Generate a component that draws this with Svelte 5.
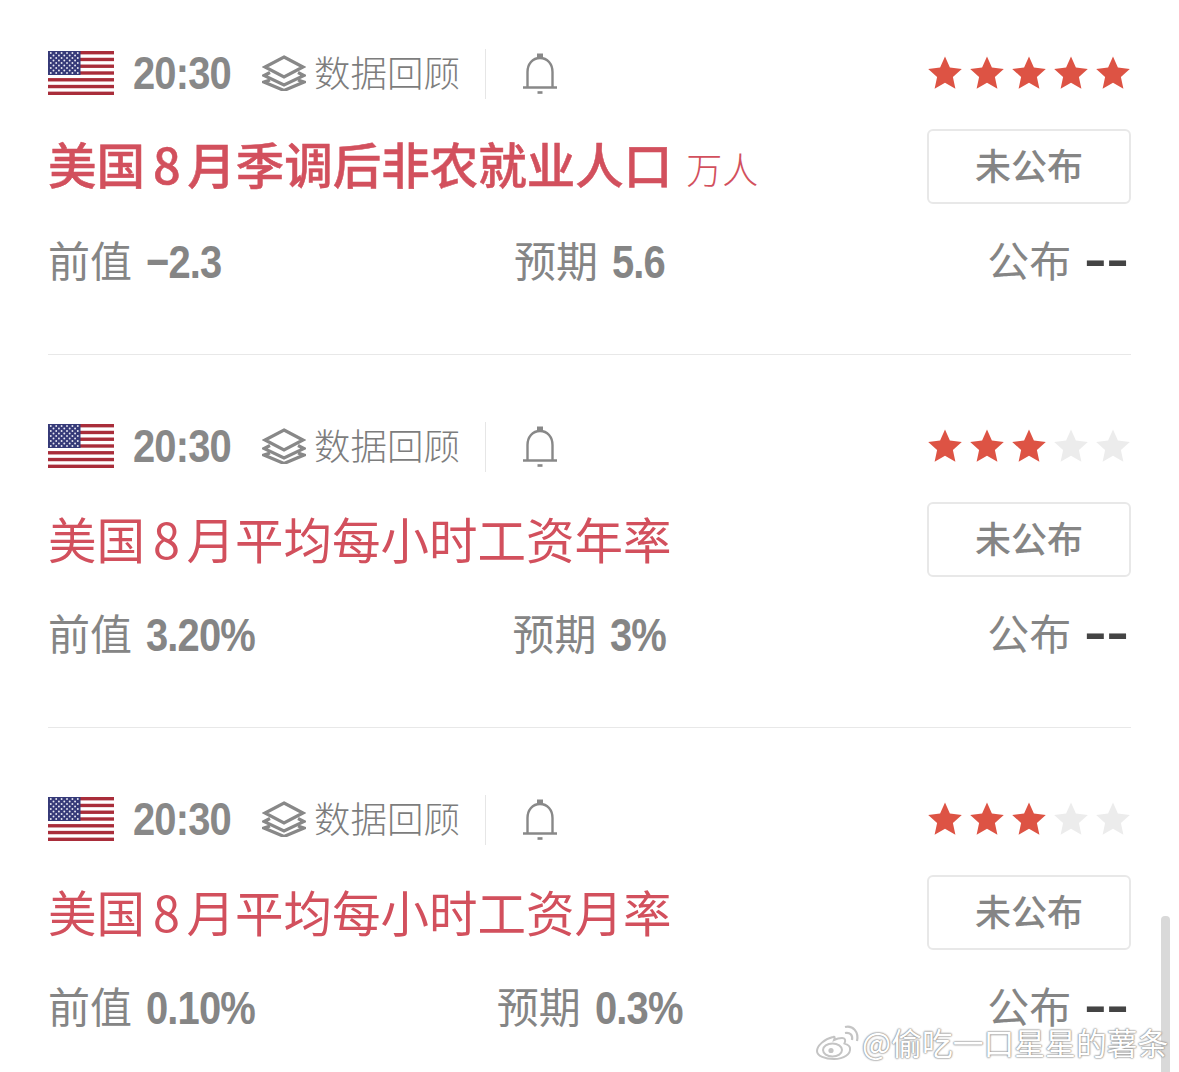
<script>
  const items = [
    { title: '季调后非农就业人口', unit: '万人', bold: true, prev: '−2.3', fore: '5.6', stars: 5 },
    { title: '平均每小时工资年率', unit: '', bold: false, prev: '3.20%', fore: '3%', stars: 3 },
    { title: '平均每小时工资月率', unit: '', bold: false, prev: '0.10%', fore: '0.3%', stars: 3 }
  ];
  const starPath = 'M17 0.5 L21.9 11.6 L33.8 12.9 L24.9 21 L27.4 32.8 L17 26.8 L6.6 32.8 L9.1 21 L0.2 12.9 L12.1 11.6 Z';
  const stripes = [0, 2, 4, 6, 8, 10, 12];
  const dots = [];
  for (let r = 0; r < 9; r++) {
    const n = r % 2 ? 5 : 6;
    for (let c = 0; c < n; c++) dots.push({ x: (r % 2 ? 5.5 : 2.8) + c * 5.4, y: 2 + r * 2.5 });
  }
  // Numbers are drawn horizontally condensed; give back the space the scale removes.
  const adv = { '.': 0.278, '%': 0.889, '−': 0.584 };
  const squeeze = (text) => {
    let w = 0;
    for (const ch of text) w += (adv[ch] ?? 0.556) * 47 - 1;
    return -(w * 0.15);
  };
</script>

<div class="page">
<main class="list">
  {#each items as item}
    <article class="item">
      <div class="top">
        <svg class="flag" viewBox="0 0 66 44" width="66" height="44" aria-hidden="true">
          <rect width="66" height="44" rx="2" fill="#fff" />
          {#each stripes as s}
            <rect y={s * 3.385} width="66" height="3.385" fill="#a92d3a" />
          {/each}
          <rect width="32.5" height="24" fill="#363a78" />
          {#each dots as d}
            <circle cx={d.x} cy={d.y} r="0.95" fill="#e8e8f2" />
          {/each}
        </svg>
        <span class="time">20:30</span>
        <svg class="layers" viewBox="0 0 44 36" width="44" height="36" aria-hidden="true">
          <path d="M22 2 L41 12 L22 22 L3 12 Z" fill="none" stroke="#888" stroke-width="3.2" />
          <path d="M8 17.5 L2 20.5 L22 30 L42 20.5 L36 17.5" fill="none" stroke="#888" stroke-width="3.2" />
          <path d="M8 25 L2 27 L22 35.5 L42 27 L36 25" fill="none" stroke="#888" stroke-width="3.2" />
        </svg>
        <span class="review">数据回顾</span>
        <span class="sep"></span>
        <svg class="bell" viewBox="0 0 36 42" width="36" height="42" aria-hidden="true">
          <path d="M5.5 35 V20 C5.5 12 10.5 6 18 6 C25.5 6 30.5 12 30.5 20 V35" fill="none" stroke="#888" stroke-width="2.4" />
          <path d="M1 35.5 H35" stroke="#888" stroke-width="2.6" />
          <path d="M15 3.5 H21" stroke="#888" stroke-width="4" />
          <path d="M15.5 40.5 H20.5" stroke="#888" stroke-width="2.6" />
        </svg>
        <div class="stars">
          {#each [1, 2, 3, 4, 5] as n}
            <svg viewBox="0 0 34 34" width="34" height="34" aria-hidden="true">
              <path d={starPath} fill={n <= item.stars ? '#dd5344' : '#ececec'} />
            </svg>
          {/each}
        </div>
      </div>

      <div class="mid">
        <h2 class:bold={item.bold}>美国<span class="eight">8</span>月{item.title}{#if item.unit}<span class="unit">{item.unit}</span>{/if}</h2>
        <div class="btn">未公布</div>
      </div>

      <div class="stats">
        <div class="stat left"><span class="label">前值</span><b class="num" style:margin-right="{squeeze(item.prev)}px">{item.prev}</b></div>
        <div class="stat"><span class="label">预期</span><b class="num" style:margin-right="{squeeze(item.fore)}px">{item.fore}</b></div>
        <div class="stat right"><span class="label">公布</span><b class="dash">--</b></div>
      </div>
    </article>
  {/each}
</main>

<div class="scrollbar"></div>
<div class="mark">
  <svg viewBox="0 0 46 38" width="46" height="38" aria-hidden="true">
    <path d="M18 14 C9 16 2 23 2 28 C2 33 10 36 19 36 C29 36 36 31 35 25 C34.500 22 31 21 29.500 20.500 C31 17 30 15 27 15 C24 15 21 16 19 17 C20 14 20 13.500 18 14 Z" fill="#fff" stroke="#c4c4c4" stroke-width="2" />
    <ellipse cx="17.500" cy="27" rx="9.500" ry="6.500" fill="#fff" stroke="#c4c4c4" stroke-width="2" />
    <circle cx="16" cy="27.500" r="2.600" fill="#c4c4c4" />
    <path d="M30 10 C35 9 38 12 37 17 M30 4 C38 2 44 9 42 18" fill="none" stroke="#c4c4c4" stroke-width="2.200" />
  </svg>
  <span>@偷吃一口星星的薯条</span>
</div>
</div>

<style>
  :global(body) {
    margin: 0;
    background: #fff;
  }
  .page {
    position: relative;
    height: 1072px;
    overflow: hidden;
  }
  .list {
    padding: 49px 48px 0;
    font-family: "Noto Sans CJK SC", "Noto Sans", sans-serif;
  }
  .item {
    height: 305px;
    border-bottom: 1px solid #e8e8e8;
    margin-bottom: 67px;
  }
  .top {
    box-sizing: border-box;
    display: flex;
    align-items: center;
    height: 50px;
    padding-bottom: 2px;
  }
  .flag {
    display: block;
    flex: none;
  }
  .time {
    flex: none;
    margin-left: 19px;
    width: 115px;
    margin-right: -17px;
    font: 700 47px/50px "Liberation Sans", sans-serif;
    letter-spacing: -1px;
    color: #888;
    white-space: nowrap;
    transform: scaleX(0.85);
    transform-origin: left center;
  }
  .layers {
    flex: none;
    margin-left: 31px;
  }
  .review {
    margin-left: 8px;
    padding-bottom: 2px;
    font-size: 36.500px;
    line-height: 46px;
    font-weight: 300;
    color: #7d7d7d;
    white-space: nowrap;
  }
  .sep {
    flex: none;
    align-self: flex-start;
    width: 1px;
    height: 50px;
    margin-left: 25px;
    background: #e6e6e6;
  }
  .bell {
    flex: none;
    margin-left: 36px;
  }
  .stars {
    margin-left: auto;
    display: flex;
    gap: 8px;
    padding-right: 1px;
  }
  .stars svg {
    display: block;
  }
  .mid {
    margin-top: 30px;
    display: flex;
    align-items: center;
    justify-content: space-between;
    height: 75px;
  }
  h2 {
    margin: 0;
    padding-bottom: 2px;
    font-size: 48.500px;
    line-height: 71px;
    font-weight: 400;
    color: #d2505d;
    white-space: nowrap;
  }
  h2.bold {
    font-weight: 500;
    -webkit-text-stroke: 0.5px #d2505d;
  }
  .eight {
    margin: 0 6.500px 0 8px;
  }
  .unit {
    margin-left: 14px;
    font-size: 36px;
    font-weight: 300;
    -webkit-text-stroke: 0;
  }
  .btn {
    box-sizing: border-box;
    width: 204px;
    height: 75px;
    padding-bottom: 6px;
    border: 2px solid #e8e8e8;
    border-radius: 6px;
    display: flex;
    align-items: center;
    justify-content: center;
    font-size: 36px;
    font-weight: 500;
    color: #858585;
  }
  .stats {
    margin-top: 33px;
    display: grid;
    grid-template-columns: 1fr auto 1fr;
    align-items: center;
    height: 50px;
  }
  .stat {
    display: flex;
    align-items: center;
    gap: 14px;
    color: #858585;
  }
  .right {
    justify-content: flex-end;
  }
  .label {
    padding-bottom: 6px;
    font-size: 42px;
    line-height: 44px;
    font-weight: 400;
    white-space: nowrap;
  }
  .num {
    font: 700 47px/50px "Liberation Sans", sans-serif;
    letter-spacing: -1px;
    white-space: nowrap;
    transform: scaleX(0.85);
    transform-origin: left center;
  }
  .dash {
    padding-bottom: 6px;
    margin-left: 13px;
    margin-right: 2px;
    font: 700 46px/44px "Liberation Sans", sans-serif;
    color: #444;
    transform: scaleX(1.45);
    transform-origin: right center;
  }
  .scrollbar {
    position: absolute;
    left: 1161px;
    top: 916px;
    width: 9px;
    height: 156px;
    border-radius: 4px 4px 0 0;
    background: #d9d9d9;
  }
  .mark {
    position: absolute;
    left: 815px;
    top: 1023px;
    display: flex;
    align-items: center;
    gap: 1px;
    font-family: "Noto Sans CJK SC", sans-serif;
    font-size: 30.800px;
    line-height: 38px;
    color: #fff;
    white-space: nowrap;
    text-shadow: 0 0 2px #8f8f8f, 0 0 2px #8f8f8f, 0 0 1px #8f8f8f;
  }
</style>
